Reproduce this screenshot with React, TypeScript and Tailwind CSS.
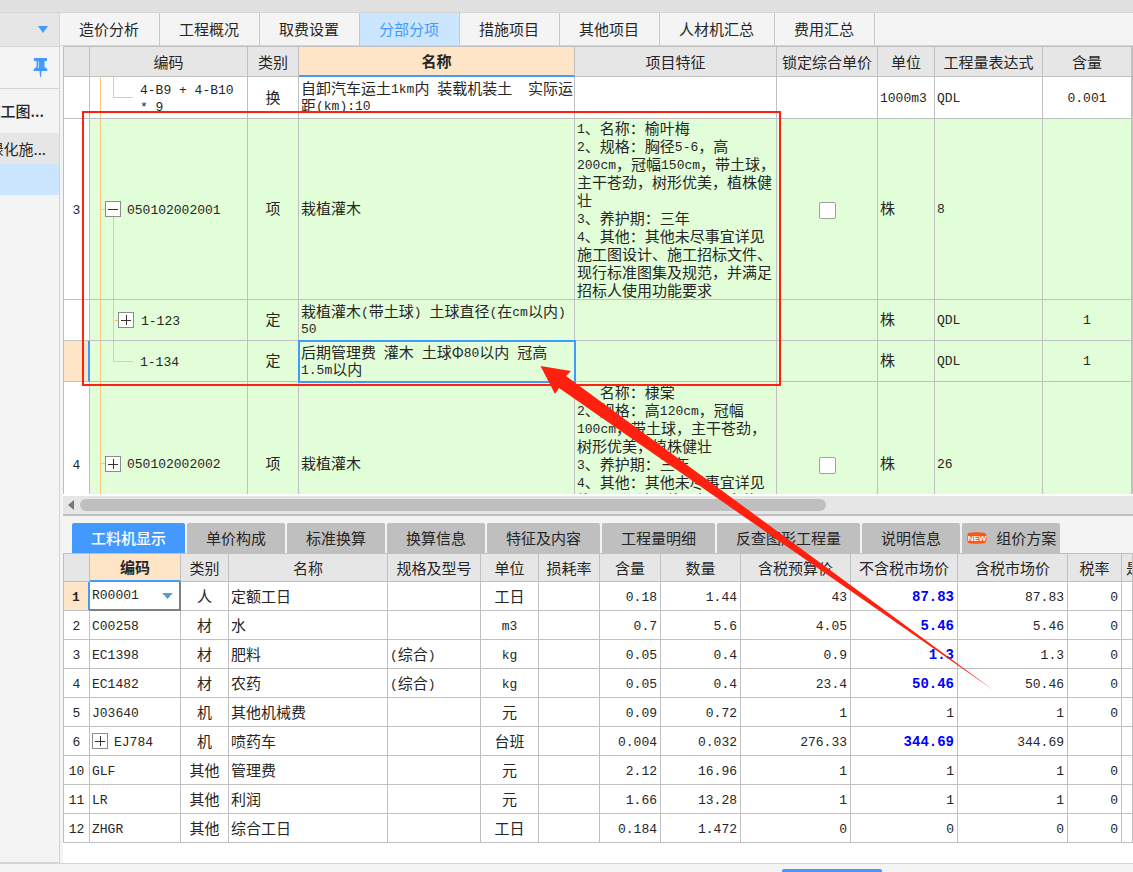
import React from "react";
import clsx from "clsx";

const mainTabs = ["造价分析", "工程概况", "取费设置", "分部分项", "措施项目", "其他项目", "人材机汇总", "费用汇总"];

const detailTabs = ["工料机显示", "单价构成", "标准换算", "换算信息", "特征及内容", "工程量明细", "反查图形工程量", "说明信息"];

const itemColumns = [
  { title: "", width: "w-[27px]" },
  { title: "编码", width: "w-[158px]" },
  { title: "类别", width: "w-[51px]" },
  { title: "名称", width: "w-[276px]" },
  { title: "项目特征", width: "w-[202px]" },
  { title: "锁定综合单价", width: "w-[101px]" },
  { title: "单位", width: "w-[57px]" },
  { title: "工程量表达式", width: "w-[108px]" },
  { title: "含量", width: "w-[89px]" },
  { title: "", width: "" },
];

const items = [
  {
    no: "", tree: "leaf", code: "4-B9 + 4-B10\n* 9", type: "换",
    name: "自卸汽车运土1km内 装载机装土  实际运\n距(km):10",
    feature: "", lock: false, unit: "1000m3", expr: "QDL", qty: "0.001", height: "h-[42px]",
  },
  {
    no: "3", tree: "open", code: "050102002001", type: "项", name: "栽植灌木",
    feature:
      "1、名称：榆叶梅\n2、规格：胸径5-6，高\n200cm，冠幅150cm，带土球，\n主干苍劲，树形优美，植株健\n壮\n3、养护期：三年\n4、其他：其他未尽事宜详见\n施工图设计、施工招标文件、\n现行标准图集及规范，并满足\n招标人使用功能要求",
    lock: true, unit: "株", expr: "8", qty: "", height: "h-[181px]",
  },
  {
    no: "", tree: "child", code: "1-123", type: "定",
    name: "栽植灌木(带土球) 土球直径(在cm以内)\n50",
    feature: "", lock: false, unit: "株", expr: "QDL", qty: "1", height: "h-[41px]",
  },
  {
    no: "", tree: "leaf", code: "1-134", type: "定",
    name: "后期管理费 灌木 土球Φ80以内 冠高\n1.5m以内",
    feature: "", lock: false, unit: "株", expr: "QDL", qty: "1", height: "h-[41px]", current: true,
  },
  {
    no: "4", tree: "closed", code: "050102002002", type: "项", name: "栽植灌木",
    feature:
      "1、名称：棣棠\n2、规格：高120cm，冠幅\n100cm，带土球，主干苍劲，\n树形优美，植株健壮\n3、养护期：三年\n4、其他：其他未尽事宜详见\n施工图设计、施工招标文件、\n现行标准图集及规范，并满足\n招标人使用功能要求",
    lock: true, unit: "株", expr: "26", qty: "", height: "h-[164px]",
  },
];

const resourceColumns = [
  { title: "", width: "w-[27px]" },
  { title: "编码", width: "w-[91px]" },
  { title: "类别", width: "w-[48px]" },
  { title: "名称", width: "w-[159px]" },
  { title: "规格及型号", width: "w-[93px]" },
  { title: "单位", width: "w-[58px]" },
  { title: "损耗率", width: "w-[61px]" },
  { title: "含量", width: "w-[61px]" },
  { title: "数量", width: "w-[80px]" },
  { title: "含税预算价", width: "w-[110px]" },
  { title: "不含税市场价", width: "w-[107px]" },
  { title: "含税市场价", width: "w-[110px]" },
  { title: "税率", width: "w-[54px]" },
  { title: "是否暂估", width: "" },
];

const resources = [
  { no: "1", code: "R00001", type: "人", name: "定额工日", spec: "", unit: "工日", rate: "0.18", qty: "1.44", budget: "43", net: "87.83", gross: "87.83", tax: "0", changed: true },
  { no: "2", code: "C00258", type: "材", name: "水", spec: "", unit: "m3", rate: "0.7", qty: "5.6", budget: "4.05", net: "5.46", gross: "5.46", tax: "0", changed: true },
  { no: "3", code: "EC1398", type: "材", name: "肥料", spec: "(综合)", unit: "kg", rate: "0.05", qty: "0.4", budget: "0.9", net: "1.3", gross: "1.3", tax: "0", changed: true },
  { no: "4", code: "EC1482", type: "材", name: "农药", spec: "(综合)", unit: "kg", rate: "0.05", qty: "0.4", budget: "23.4", net: "50.46", gross: "50.46", tax: "0", changed: true },
  { no: "5", code: "J03640", type: "机", name: "其他机械费", spec: "", unit: "元", rate: "0.09", qty: "0.72", budget: "1", net: "1", gross: "1", tax: "0" },
  { no: "6", code: "EJ784", type: "机", name: "喷药车", spec: "", unit: "台班", rate: "0.004", qty: "0.032", budget: "276.33", net: "344.69", gross: "344.69", tax: "", changed: true, group: true },
  { no: "10", code: "GLF", type: "其他", name: "管理费", spec: "", unit: "元", rate: "2.12", qty: "16.96", budget: "1", net: "1", gross: "1", tax: "0" },
  { no: "11", code: "LR", type: "其他", name: "利润", spec: "", unit: "元", rate: "1.66", qty: "13.28", budget: "1", net: "1", gross: "1", tax: "0" },
  { no: "12", code: "ZHGR", type: "其他", name: "综合工日", spec: "", unit: "工日", rate: "0.184", qty: "1.472", budget: "0", net: "0", gross: "0", tax: "0" },
];

// latin runs are set in a half-width mono face next to the full-width chinese
const Text = ({ children }: { children: string }) => (
  <>
    {children.split(/([\x20-\x7e]+)/).map((part, i) =>
      i % 2 ? (
        <span key={i} className="align-[1px] font-['Liberation_Mono',monospace] text-[13px] leading-none">
          {part}
        </span>
      ) : (
        part
      )
    )}
  </>
);

const Toggle = ({ open }: { open?: boolean }) => (
  <button
    aria-label={open ? "折叠" : "展开"}
    className="flex h-4 w-4 shrink-0 items-center justify-center border border-[#8c8c8c] bg-white"
  >
    <svg viewBox="0 0 10 10" className="h-[10px] w-[10px]" stroke="#333" strokeWidth="1" shapeRendering="crispEdges">
      <path d={open ? "M0 5.5H10" : "M0 5.5H10M5.5 0V10"} />
    </svg>
  </button>
);

const Branch = ({ width, tick, down }: { width: string; tick?: boolean; down?: boolean }) => (
  <span className={clsx("flex shrink-0 flex-col self-stretch", width)}>
    <span className={clsx("flex-1 border-l border-[#ffc67a]", tick && "border-b")} />
    <span className={clsx("flex-1 border-[#ffc67a]", down && "border-l")} />
  </span>
);

const TreeCode = ({ item }: { item: any }) => {
  const nested = item.tree === "leaf" || item.tree === "child";
  return (
    <div className="flex h-full items-center pl-[10px]">
      {nested && <Branch width="w-[13px]" down />}
      {item.tree === "leaf" ? (
        <Branch width="w-5" tick />
      ) : (
        <>
          <Branch width="w-[5px]" tick down />
          <span className="flex flex-col items-center self-stretch">
            <span className="flex-1" />
            <Toggle open={item.tree === "open"} />
            <span className={clsx("w-px flex-1", item.tree === "open" && "bg-[#ffc67a]")} />
          </span>
        </>
      )}
      <span className={clsx("whitespace-pre pb-[2px] leading-[17px]", nested ? "ml-[7px]" : "ml-[6px]")}>
        <Text>{item.code}</Text>
      </span>
    </div>
  );
};

const HeadRow = ({ columns, active, height }: any) => (
  <thead>
    <tr>
      {columns.map((col: any, i: number) => (
        <th
          key={i}
          className={clsx(
            "overflow-hidden whitespace-nowrap border-r p-0 text-center",
            height,
            col.width,
            i === 0 && "border-l",
            col.title === active
              ? "border-b-2 border-r-[#c0c0c0] border-b-[#4499ff] bg-[#fee5c8] font-bold"
              : "border-b border-[#c0c0c0] bg-[#e6e6e6] font-normal",
            !col.width && "pl-1 text-left"
          )}
        >
          {col.title}
        </th>
      ))}
    </tr>
  </thead>
);

const ItemTable = () => (
  <table className="w-full table-fixed border-separate border-spacing-0 border-t border-[#c0c0c0]">
    <HeadRow columns={itemColumns} active="名称" height="h-[30px]" />
    <tbody>
      {items.map((item, i) => {
        const cell = clsx("border-b border-r border-[#c0c0c0] p-0", item.height, i > 0 && "bg-[#e2fed8]");
        return (
          <tr key={i}>
            <td
              className={clsx(
                "border-b border-l border-[#c0c0c0] p-0 text-center",
                item.current ? "border-r-2 border-r-[#4499ff] bg-[#fee5c8]" : "border-r bg-white"
              )}
            >
              <Text>{item.no}</Text>
            </td>
            <td className={cell}>
              <TreeCode item={item} />
            </td>
            <td className={clsx(cell, "pb-[2px] text-center")}>{item.type}</td>
            <td className={clsx(cell, item.current && "outline-2 -outline-offset-1 outline-[#4499ff]")}>
              <div className="whitespace-pre pb-[3px] pl-[2px] leading-[17px]">
                <Text>{item.name}</Text>
              </div>
            </td>
            <td className={cell}>
              <div className="whitespace-pre pl-[2px] leading-[18px]">
                <Text>{item.feature}</Text>
              </div>
            </td>
            <td className={clsx(cell, "text-center")}>
              {item.lock && (
                <input
                  type="checkbox"
                  aria-label="锁定综合单价"
                  className="inline-block h-[17px] w-[17px] appearance-none rounded-xs border border-[#a0a0a0] bg-white align-middle"
                />
              )}
            </td>
            <td className={clsx(cell, "pb-[2px] pl-[2px]")}>
              <Text>{item.unit}</Text>
            </td>
            <td className={clsx(cell, "pb-[2px] pl-[2px]")}>
              <Text>{item.expr}</Text>
            </td>
            <td className={clsx(cell, "pb-[2px] text-center")}>
              <Text>{item.qty}</Text>
            </td>
            <td className={cell} />
          </tr>
        );
      })}
    </tbody>
  </table>
);

const ResourceTable = () => (
  <table className="w-full table-fixed border-separate border-spacing-0 border-t border-[#c0c0c0]">
    <HeadRow columns={resourceColumns} active="编码" height="h-[28px]" />
    <tbody>
      {resources.map((row, i) => {
        const cell = "h-[29px] border-b border-r border-[#c0c0c0] p-0 leading-5";
        return (
          <tr key={row.no}>
            <td
              className={clsx(
                "border-b border-l border-[#c0c0c0] p-0 text-center",
                i === 0 ? "border-r-2 border-r-[#4499ff] bg-[#fee5c8] font-bold" : "border-r"
              )}
            >
              <Text>{row.no}</Text>
            </td>
            {i === 0 ? (
              <td className="h-[29px] border-b-2 border-r-2 border-[#808080] p-0">
                <div className="flex items-center pl-[2px] pr-[6px]">
                  <select
                    aria-label="编码"
                    className="min-w-0 flex-1 appearance-none bg-transparent font-['Liberation_Mono',monospace] text-[13px] leading-5 outline-none"
                  >
                    <option>{row.code}</option>
                  </select>
                  <svg viewBox="0 0 12 7" className="h-[6px] w-[11px]">
                    <path d="M0 0H12L6 7Z" fill="#4a9fd0" />
                    <path d="M0 0H12L11 1.5H1Z" fill="#7f97a5" />
                  </svg>
                </div>
              </td>
            ) : (
              <td className={clsx(cell, "pl-[2px]")}>
                <div className="flex items-center gap-[6px]">
                  {row.group && <Toggle />}
                  <span>
                    <Text>{row.code}</Text>
                  </span>
                </div>
              </td>
            )}
            <td className={clsx(cell, "text-center")}>{row.type}</td>
            <td className={clsx(cell, "pl-[2px]")}>{row.name}</td>
            <td className={clsx(cell, "pl-[2px]")}>
              <Text>{row.spec}</Text>
            </td>
            <td className={clsx(cell, "text-center")}>
              <Text>{row.unit}</Text>
            </td>
            <td className={cell} />
            {[row.rate, row.qty, row.budget].map((value, n) => (
              <td key={n} className={clsx(cell, "pr-[3px] text-right")}>
                <Text>{value}</Text>
              </td>
            ))}
            <td className={clsx(cell, "pr-[3px] text-right")}>
              {row.changed ? (
                <span className="align-[1px] font-['Liberation_Mono',monospace] text-[14px] font-bold leading-none text-[#0000ff]">
                  {row.net}
                </span>
              ) : (
                <Text>{row.net}</Text>
              )}
            </td>
            <td className={clsx(cell, "pr-[3px] text-right")}>
              <Text>{row.gross}</Text>
            </td>
            <td className={clsx(cell, "pr-[3px] text-right")}>
              <Text>{row.tax}</Text>
            </td>
            <td className={cell} />
          </tr>
        );
      })}
    </tbody>
  </table>
);

const Sidebar = () => (
  <aside className="flex w-[60px] shrink-0 flex-col overflow-hidden border-b border-r border-[#d4d4d4] bg-[#f4f4f4]">
    <button aria-label="展开列表" className="flex h-[35px] items-center justify-end border-b border-t border-[#d4d4d4] bg-[#e6e6e6] pr-[11px]">
      <svg viewBox="0 0 10 7" className="h-[7px] w-[10px]">
        <path d="M0 0H10L5 7Z" fill="#4499ff" />
      </svg>
    </button>
    <div className="flex h-[42px] items-center justify-end border-b border-[#d4d4d4] pr-[11px]">
      <button aria-label="固定">
        <svg viewBox="0 0 15 19" className="h-[19px] w-[15px]" fill="#4499ff">
          <path d="M1 0H14V3H11.5V9Q14.5 10 14.5 13H0.5Q0.5 10 3.5 9V3H1Z" />
          <path d="M6.5 13H8.5L7.9 19H7.1Z" />
          <path d="M5.5 3V10" stroke="#b9d9ff" strokeWidth="1" />
        </svg>
      </button>
    </div>
    <a href="#" className="flex h-11 items-center justify-end whitespace-nowrap pr-[15px] font-medium">
      施工图...
    </a>
    <a href="#" className="flex h-[31px] items-center justify-end whitespace-nowrap bg-[#e6e6e6] pr-[13px]">
      绿化施...
    </a>
    <div className="h-[31px] bg-[#cce6ff]" />
  </aside>
);

const App = () => {
  const [mainTab, setMainTab] = React.useState("分部分项");
  const [detailTab, setDetailTab] = React.useState("工料机显示");

  return (
    <div className="relative flex h-screen flex-col overflow-hidden bg-[#f4f4f4] font-['Noto_Sans_CJK_SC',sans-serif] text-[15px] leading-5 text-[#262626]">
      <div className="h-3 shrink-0 bg-[#e1e1e1]" />
      <div className="flex min-h-0 flex-1">
        <Sidebar />
        <main className="flex min-w-0 flex-1 flex-col">
          <nav className="flex h-[34px] shrink-0 border-b border-t border-[#d4d4d4]">
            {mainTabs.map((tab) => (
              <button
                key={tab}
                onClick={() => setMainTab(tab)}
                className={clsx(
                  "border-r border-[#c8c8c8] pl-[19px] pr-5",
                  tab === mainTab && "bg-[#cce6ff] text-[#4499ff]"
                )}
              >
                {tab}
              </button>
            ))}
          </nav>
          <div className="ml-[3px] flex min-h-0 flex-1 flex-col bg-white">
            <div className="mb-[2px] min-h-0 flex-1 overflow-hidden">
              <ItemTable />
            </div>
            <div className="flex h-[18px] shrink-0 items-center bg-[#e6e6e6] pl-[5px]">
              <svg viewBox="0 0 6 10" className="mr-[6px] h-[10px] w-[6px] shrink-0">
                <path d="M6 0V10L0 5Z" fill="#777" />
              </svg>
              <div className="h-3 w-[70%] rounded-full bg-[#bfbfbf]" />
            </div>
            <div className="flex shrink-0 gap-[2px] border-t-2 border-[#c0c0c0] bg-[#f4f4f4] pl-[9px] pt-[7px]">
              {detailTabs.map((tab) => (
                <button
                  key={tab}
                  onClick={() => setDetailTab(tab)}
                  className={clsx(
                    "h-[30px] shrink-0 rounded-t-xs px-[19px]",
                    tab === detailTab ? "bg-[#4499ff] font-medium text-white" : "bg-[#bfbfbf]"
                  )}
                >
                  {tab}
                </button>
              ))}
              <button
                onClick={() => setDetailTab("组价方案")}
                className="flex h-[30px] shrink-0 items-center gap-[9px] rounded-t-xs bg-[#bfbfbf] pl-[5px] pr-1"
              >
                <svg viewBox="0 0 20 12" className="h-3 w-5">
                  <path d="M1 1Q10 -0.5 18 1Q20 3 19.5 6Q20 9 18 11Q10 12.5 1 11Q-0.5 6 1 1Z" fill="#ff5512" />
                  <text x="10" y="9" textAnchor="middle" fontSize="8" fontWeight="700" fontFamily="Liberation Sans" fill="#fff">
                    NEW
                  </text>
                </svg>
                组价方案
              </button>
            </div>
            <div className="shrink-0 pb-5">
              <ResourceTable />
            </div>
          </div>
        </main>
      </div>
      <footer className="flex h-[9px] shrink-0 items-end border-t border-[#d4d4d4]">
        <div className="ml-[69%] h-[3px] w-[100px] rounded-t-xs bg-[#4499ff]" />
      </footer>

      {/* markup drawn over the window */}
      <svg className="pointer-events-none absolute left-0 top-0 h-[872px] w-[1133px]" viewBox="0 0 1133 872">
        <rect x="83" y="112" width="697" height="273" fill="none" stroke="#ff2010" strokeWidth="2" />
        <path d="M540.5 366L571 371L566 376L994 690.5L559 388L555 394Z" fill="#ff2010" />
      </svg>
    </div>
  );
};

export default App;
